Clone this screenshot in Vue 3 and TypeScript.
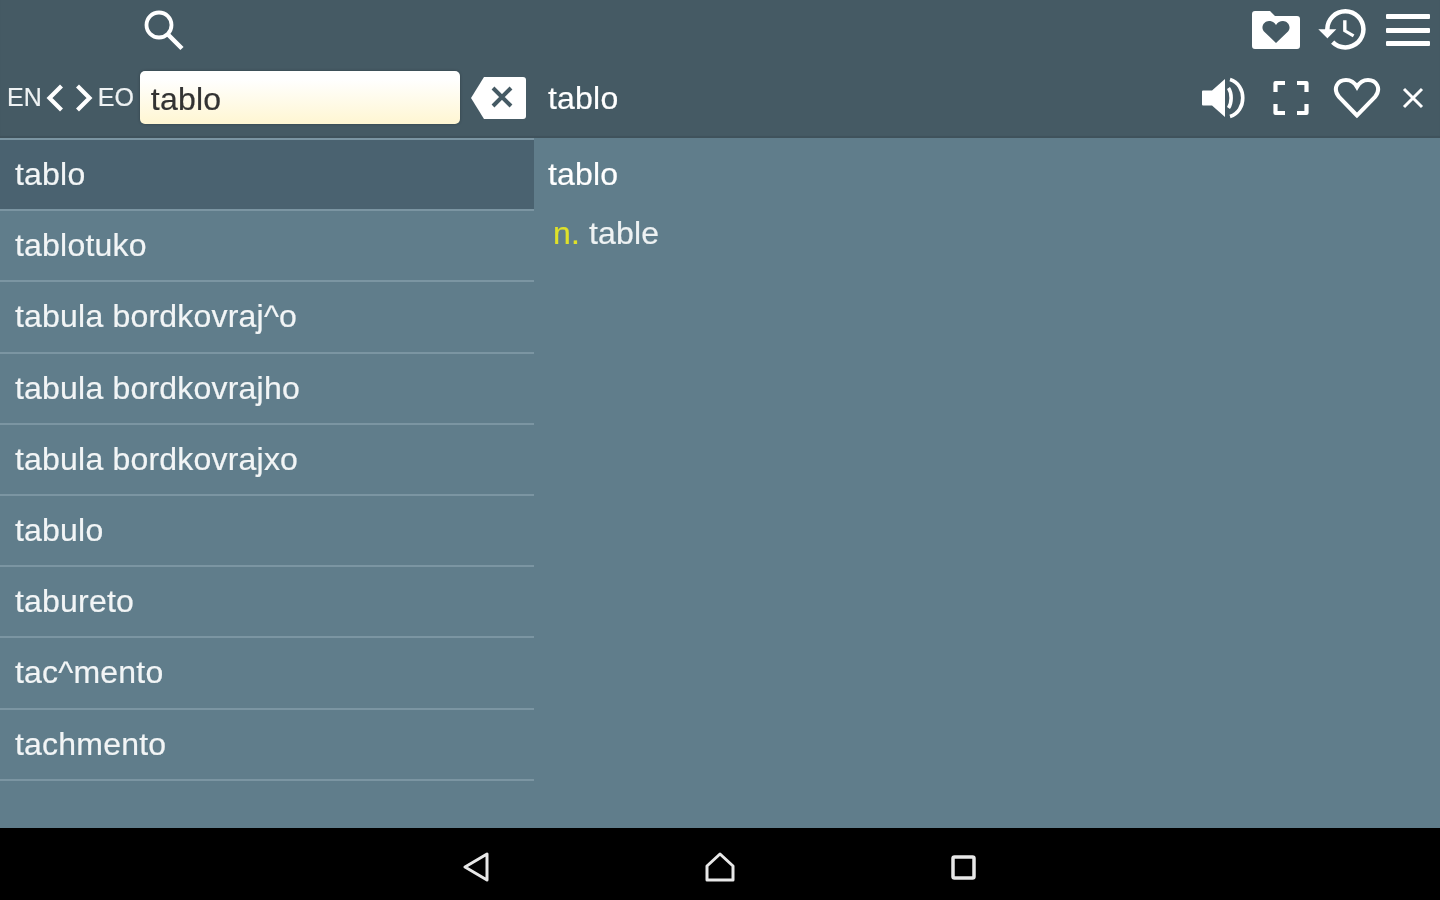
<script setup lang="ts">
const words = [
  'tablo',
  'tablotuko',
  'tabula bordkovraj^o',
  'tabula bordkovrajho',
  'tabula bordkovrajxo',
  'tabulo',
  'tabureto',
  'tac^mento',
  'tachmento',
]
const selected = 'tablo'
</script>

<template>
  <div class="screen">
    <header class="toolbar">
      <div class="toolbar-top">
        <button type="button" class="icon-btn search-btn" aria-label="Search">
          <svg width="44" height="42" viewBox="0 0 44 42" fill="none" stroke="#fff">
            <circle cx="17" cy="16" r="12.500" stroke-width="3.800" />
            <path d="M26 25.500 40 39.500" stroke-width="4.500" />
          </svg>
        </button>
        <div class="top-actions">
          <svg width="48" height="38" viewBox="0 0 48 38">
            <path fill="#fff" d="M3 0h15l5 5h22a3 3 0 0 1 3 3v27a3 3 0 0 1-3 3H3a3 3 0 0 1-3-3V3a3 3 0 0 1 3-3z" />
            <path fill="#455a64" d="M24 32 12 20.500c-4-5 .5-10.500 5-10.500 3 0 5.500 1.500 7 4 1.500-2.500 4-4 7-4 4.500 0 9 5.500 5 10.500z" />
          </svg>
          <svg class="history" width="48" height="42" viewBox="1 3 21 18.600">
            <path fill="#fff" d="M13 3a9 9 0 0 0-9 9H1l3.890 3.890.070.140L9 12H6c0-3.870 3.130-7 7-7s7 3.130 7 7-3.130 7-7 7c-1.930 0-3.680-.790-4.940-2.060l-1.420 1.420A8.954 8.954 0 0 0 13 21a9 9 0 0 0 0-18zm-1 5v5l4.280 2.540.720-1.210-3.500-2.080V8H12z" />
          </svg>
          <div class="menu-lines"><span></span><span></span><span></span></div>
        </div>
      </div>
      <div class="toolbar-bottom">
        <div class="search-side">
          <span class="lang">EN</span>
          <svg class="chevron" width="18" height="28" viewBox="0 0 18 28" fill="none" stroke="#fff" stroke-width="4.200">
            <path d="M15.500 2 3.500 14l12 12" />
          </svg>
          <svg class="chevron chevron-right" width="18" height="28" viewBox="0 0 18 28" fill="none" stroke="#fff" stroke-width="4.200">
            <path d="M2.500 2l12 12-12 12" />
          </svg>
          <span class="lang lang-eo">EO</span>
          <div class="search-input"><span class="blurred">tablo</span></div>
          <svg class="backspace" width="56" height="44" viewBox="0 0 56 44">
            <path fill="#fff" d="M14 1h39a3 3 0 0 1 3 3v36a3 3 0 0 1-3 3H14L1 22z" />
            <path fill="none" stroke="#455a64" stroke-width="4" d="M23 12l18 18M41 12 23 30" />
          </svg>
        </div>
        <div class="entry-side">
          <span class="entry-title">tablo</span>
          <div class="entry-actions">
            <svg class="act-sound" width="44" height="42" viewBox="0 0 44 42">
              <path fill="#fff" d="M0 14.500a1 1 0 0 1 1-1h9L23 2v38L10 28.500H1a1 1 0 0 1-1-1z" />
              <path fill="none" stroke="#fff" stroke-width="3.600" d="M26.500 11c3.500 5 3.500 15 0 20M28 2.500c17 5 17 32 0 37" />
            </svg>
            <svg class="act-full" width="36" height="36" viewBox="0 0 36 36" fill="none" stroke="#fff" stroke-width="4.200" stroke-linejoin="round">
              <path d="M2.500 12V3h9.500M24 3h9.500v9M33.500 24v9H24M12 33H2.500v-9" />
            </svg>
            <svg class="act-heart" width="48" height="42" viewBox="0 0 48 42" fill="none" stroke="#fff" stroke-width="4">
              <path d="M24 38.500 6 20C-1 11 5 3 13 3c5 0 8.500 2.500 11 7 2.500-4.500 6-7 11-7 8 0 14 8 7 17z" />
            </svg>
            <svg class="act-close" width="22" height="22" viewBox="0 0 22 22" fill="none" stroke="#fff" stroke-width="3">
              <path d="M2 2l18 18M20 2 2 20" />
            </svg>
          </div>
        </div>
      </div>
    </header>

    <main class="content">
      <ul class="word-list">
        <li v-for="w in words" :key="w" class="word-row" :class="{ active: w === selected }">
          <span class="blurred">{{ w }}</span>
        </li>
      </ul>
      <section class="entry">
        <div class="entry-word blurred">tablo</div>
        <div class="entry-def blurred"><span class="pos">n.</span> table</div>
      </section>
    </main>

    <footer class="navbar">
      <svg width="26" height="30" viewBox="0 0 26 30" fill="none" stroke="#e8e8e8" stroke-width="3" stroke-linejoin="round">
        <path d="M24 2v26L2 15z" />
      </svg>
      <svg class="nav-home" width="30" height="30" viewBox="0 0 30 30" fill="none" stroke="#e8e8e8" stroke-width="3" stroke-linejoin="round">
        <path d="M15 2 2 14v14h26V14z" />
      </svg>
      <svg width="26" height="26" viewBox="0 0 26 26" fill="none" stroke="#e8e8e8" stroke-width="3.500">
        <rect x="3" y="3" width="21" height="21" rx="1.500" />
      </svg>
    </footer>
  </div>
</template>

<style>
html,
body {
  margin: 0;
  background: #000;
}
</style>

<style scoped>
.screen {
  width: 1440px;
  height: 900px;
  display: flex;
  flex-direction: column;
  overflow: hidden;
  font-family: "Liberation Sans", Arial, sans-serif;
  color: #fff;
  background: #607d8b;
  -webkit-text-stroke: 0.2px currentColor;
}
/* the reference is an upscaled capture, everything drawn on the bars is soft */
.blurred,
.lang,
.entry-title,
.screen svg {
  filter: blur(0.6px);
}
.toolbar {
  height: 138px;
  flex-shrink: 0;
  display: flex;
  flex-direction: column;
  background: #455a64;
  box-shadow: inset 0 -2px 1px #3f525b;
}
.toolbar-top {
  height: 71px;
  display: flex;
  align-items: flex-start;
  justify-content: space-between;
}
.icon-btn {
  padding: 0;
  border: 0;
  background: none;
  line-height: 0;
}
.search-btn {
  margin: 9px 0 0 142px;
}
.top-actions {
  display: flex;
  align-items: center;
  margin: 9px 10px 0 0;
  height: 42px;
}
.history {
  margin-left: 18px;
}
.menu-lines {
  width: 44px;
  height: 32px;
  margin-left: 20px;
  display: flex;
  flex-direction: column;
  justify-content: space-between;
  filter: blur(0.6px);
}
.menu-lines span {
  height: 5px;
  background: #fff;
  border-radius: 1px;
}
.toolbar-bottom {
  flex: 1;
  display: flex;
}
.search-side {
  width: 534px;
  height: 53px;
  display: flex;
  align-items: center;
  flex-shrink: 0;
}
.lang {
  margin-left: 7px;
  font-size: 25px;
  color: #eef2f3;
}
.chevron {
  margin-left: 4px;
}
.chevron-right {
  margin-left: 11px;
}
.lang-eo {
  margin-left: 5px;
}
.search-input {
  width: 320px;
  height: 53px;
  margin-left: 6px;
  padding-left: 11px;
  box-sizing: border-box;
  line-height: 57px;
  font-size: 32px;
  letter-spacing: 0.2px;
  color: #333;
  border-radius: 5px;
  background: linear-gradient(#ffffff 15%, #fff6d2);
  box-shadow: 0 0 3px rgba(0, 0, 0, 0.3);
}
.backspace {
  margin-left: 10px;
}
.entry-side {
  flex: 1;
  height: 53px;
  display: flex;
  align-items: center;
  justify-content: space-between;
  padding: 0 16px 0 14px;
}
.entry-title {
  font-size: 32px;
  letter-spacing: 0.2px;
  margin-top: 2px;
}
.entry-actions {
  display: flex;
  align-items: center;
}
.act-full {
  margin: 1px 0 0 27px;
}
.act-heart {
  margin-left: 24px;
}
.act-close {
  margin-left: 21px;
}
.content {
  flex: 1;
  min-height: 0;
  display: flex;
}
.word-list {
  width: 534px;
  flex-shrink: 0;
  margin: 0;
  padding: 0;
  list-style: none;
  border-top: 2px solid #7b95a2;
}
.word-row {
  height: 71.200px;
  box-sizing: border-box;
  padding-left: 15px;
  display: flex;
  align-items: center;
  font-size: 32px;
  letter-spacing: 0.2px;
  color: #f2f5f6;
  border-bottom: 2px solid #7b95a2;
}
.word-row.active {
  background: #4a6270;
}
.entry {
  flex: 1;
  padding: 17px 14px;
  font-size: 32px;
  letter-spacing: 0.15px;
}
.entry-word {
  line-height: 38px;
}
.entry-def {
  margin: 21px 0 0 5px;
  line-height: 38px;
  color: #eef2f3;
}
.pos {
  color: #dfe12a;
}
.navbar {
  height: 72px;
  box-sizing: border-box;
  padding: 6px 2px 0 0;
  flex-shrink: 0;
  display: flex;
  align-items: center;
  justify-content: center;
  background: #000;
}
.nav-home {
  margin: 0 215px 0 216px;
}
</style>
